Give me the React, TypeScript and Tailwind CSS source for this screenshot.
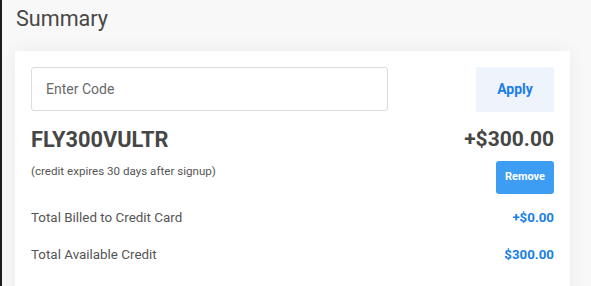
export default function App() {
  return (
    <div className="w-[591px] h-[286px] overflow-hidden bg-[#f8f8f8] border-l-2 border-[#1e1e1e] font-['Roboto',sans-serif]">
      <div className="h-[51px] pl-[14px] pt-[4px] text-[21.6px] leading-[30px] text-[#474747]">Summary</div>
      <div className="ml-[13px] w-[555px] h-[260px] bg-white shadow-[0_0_18px_rgba(0,0,0,0.06)] p-[16px]">
        <div className="flex justify-between">
          <div className="w-[357px] h-[44px] border border-[#dcdcdc] rounded-[3px] flex items-center pl-[14px] text-[14px] text-[#6a6a6a]">
            Enter Code
          </div>
          <button className="w-[78px] h-[45px] bg-[#eef3fc] text-[#1a7fe8] font-bold text-[14px] rounded-[2px]">Apply</button>
        </div>
        <div className="flex justify-between mt-[15px]">
          <div>
            <div className="text-[21.8px] leading-[25px] font-bold text-[#464646]">FLY300VULTR</div>
            <div className="mt-[11px] text-[11.6px] leading-[16px] text-[#555]">(credit expires 30 days after signup)</div>
          </div>
          <div className="flex flex-col items-end">
            <div className="text-[21px] leading-[25px] font-bold text-[#464646]">+$300.00</div>
            <button className="mt-[9px] w-[58px] h-[33px] bg-[#3d9df3] text-white font-bold text-[11px] rounded-[3px]">Remove</button>
          </div>
        </div>
        <div className="flex justify-between items-center mt-[14px] h-[20px] text-[13.4px]">
          <span className="text-[#555]">Total Billed to Credit Card</span>
          <span className="font-bold text-[#1a7fe8] text-[13.3px]">+$0.00</span>
        </div>
        <div className="flex justify-between items-center mt-[17px] h-[20px] text-[13.4px]">
          <span className="text-[#555]">Total Available Credit</span>
          <span className="font-bold text-[#1a7fe8] text-[13.3px]">$300.00</span>
        </div>
      </div>
    </div>
  );
}
